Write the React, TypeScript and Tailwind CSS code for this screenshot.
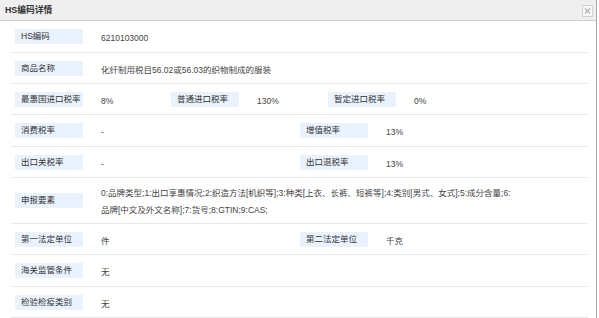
type Cell = { label: string; value: string };
type Row = { cells: Cell[]; h: string; cols?: string };

const rows: Row[] = [
  { cells: [{ label: 'HS编码', value: '6210103000' }], h: 'h-[32px]' },
  { cells: [{ label: '商品名称', value: '化纤制用税目56.02或56.03的织物制成的服装' }], h: 'h-[31px]' },
  {
    cells: [
      { label: '最惠国进口税率', value: '8%' },
      { label: '普通进口税率', value: '130%' },
      { label: '暂定进口税率', value: '0%' },
    ],
    h: 'h-[31px]',
    cols: 'grid-cols-[156px_157px_1fr]',
  },
  {
    cells: [
      { label: '消费税率', value: '-' },
      { label: '增值税率', value: '13%' },
    ],
    h: 'h-[32px]',
    cols: 'grid-cols-[285px_1fr]',
  },
  {
    cells: [
      { label: '出口关税率', value: '-' },
      { label: '出口退税率', value: '13%' },
    ],
    h: 'h-[31px]',
    cols: 'grid-cols-[285px_1fr]',
  },
];

const rowsAfter: Row[] = [
  {
    cells: [
      { label: '第一法定单位', value: '件' },
      { label: '第二法定单位', value: '千克' },
    ],
    h: 'h-[31px]',
    cols: 'grid-cols-[285px_1fr]',
  },
  { cells: [{ label: '海关监管条件', value: '无' }], h: 'h-[32px]' },
  { cells: [{ label: '检验检疫类别', value: '无' }], h: 'h-[31px]' },
];

function Label({ text }: { text: string }) {
  return (
    <div className="w-[68px] h-[15px] shrink-0 bg-[#e9f2fd] pl-[6px] leading-[15px] text-[#333] whitespace-nowrap overflow-hidden">
      {text}
    </div>
  );
}

function Field({ cell }: { cell: Cell }) {
  return (
    <div className="flex items-center pl-[4px]">
      <Label text={cell.label} />
      <span className="ml-[18px] pt-[4px] leading-[15px] text-[#444] whitespace-nowrap">{cell.value}</span>
    </div>
  );
}

function InfoRow({ row }: { row: Row }) {
  return (
    <div className={`${row.h} border-b border-[#e8e8e8] grid items-center ${row.cols ?? 'grid-cols-1'}`}>
      {row.cells.map((c) => (
        <Field key={c.label} cell={c} />
      ))}
    </div>
  );
}

export default function App() {
  return (
    <div
      className="w-[597px] h-[318px] bg-white border-r border-[#a8a8a8] overflow-hidden text-[8.5px]"
      style={{ fontFamily: '"Liberation Sans", "Noto Sans CJK SC", sans-serif' }}
    >
      {/* header */}
      <div className="h-[21px] bg-[#efefef] border-b border-[#cfcfcf] flex items-center justify-between pl-[5px] pr-[3px]">
        <span className="font-bold text-[#333] text-[8.8px] leading-[15px]">HS编码详情</span>
        <svg width="11" height="12" viewBox="0 0 11 12" className="mt-[1px]">
          <rect x="0.5" y="0.5" width="10" height="11" fill="#f7f7f7" stroke="#d2d2d2" />
          <path d="M3 3.5 L8 8.5 M8 3.5 L3 8.5" stroke="#b4b4b4" strokeWidth="1.4" />
        </svg>
      </div>

      <div className="pl-[11px] pr-[8px]">
        {rows.map((r, i) => (
          <InfoRow key={i} row={r} />
        ))}

        {/* 申报要素 */}
        <div className="h-[46px] border-b border-[#e8e8e8] flex items-center pl-[4px]">
          <Label text="申报要素" />
          <p className="ml-[18px] w-[412px] leading-[17.5px] text-[#444] pt-[3px]">
            0:品牌类型;1:出口享惠情况;2:织造方法[机织等];3:种类[上衣、长裤、短裤等];4:类别[男式、女式];5:成分含量;6:品牌[中文及外文名称];7:货号;8:GTIN;9:CAS;
          </p>
        </div>

        {rowsAfter.map((r, i) => (
          <InfoRow key={i} row={r} />
        ))}
      </div>
    </div>
  );
}
